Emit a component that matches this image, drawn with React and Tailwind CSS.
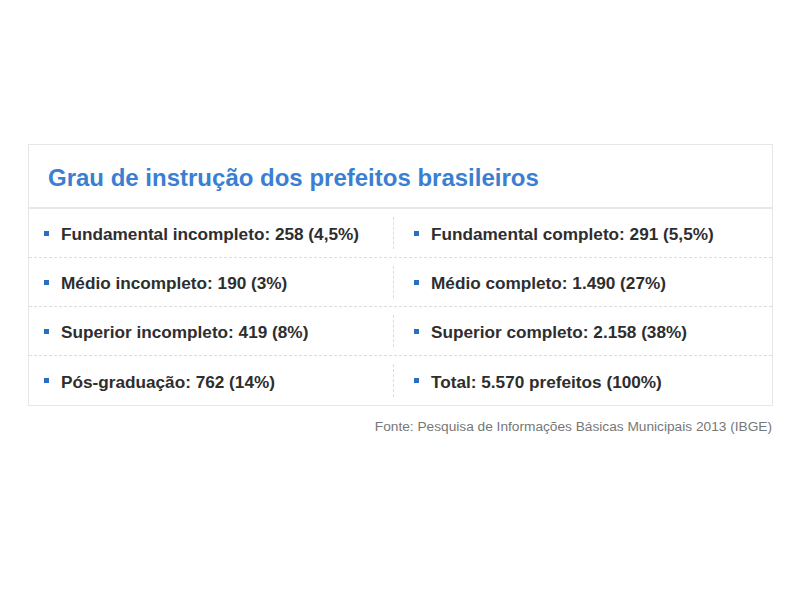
const rows = [
  ['Fundamental incompleto: 258 (4,5%)', 'Fundamental completo: 291 (5,5%)'],
  ['Médio incompleto: 190 (3%)', 'Médio completo: 1.490 (27%)'],
  ['Superior incompleto: 419 (8%)', 'Superior completo: 2.158 (38%)'],
  ['Pós-graduação: 762 (14%)', 'Total: 5.570 prefeitos (100%)'],
];

const Item = ({ text, first }) => (
  <div className={`flex items-center ${first ? 'pl-[15px]' : 'pl-[20px]'}`}>
    <span className="w-[5px] h-[5px] bg-[#2a6ec4] shrink-0" />
    <span className="ml-[12px] text-[17.2px] font-bold text-[#2e2e2e] whitespace-nowrap leading-none pt-[4px]">{text}</span>
  </div>
);

export default function App() {
  return (
    <div className="w-[800px] h-[600px] bg-white font-['Liberation_Sans',Arial,sans-serif] pt-[144px] pl-[28px]">
      <div className="w-[745px] border border-[#e6e6e6]">
        <div className="h-[64px] border-b-2 border-[#e8e8e8] flex items-center pl-[19px] pt-[4px]">
          <h2 className="text-[24px] font-bold text-[#3a7fd2] leading-none">
            Grau de instrução dos prefeitos brasileiros
          </h2>
        </div>
        {rows.map(([a, b], i) => (
          <div
            key={i}
            className={`h-[49px] grid grid-cols-[364px_1fr] ${i < rows.length - 1 ? 'border-b border-dashed border-[#dcdcdc]' : ''}`}
          >
            <Item text={a} first />
            <div className="flex items-stretch">
              <div className="my-[8px] border-l border-dashed border-[#dcdcdc]" />
              <Item text={b} />
            </div>
          </div>
        ))}
      </div>
      <p className="w-[745px] text-right text-[13.7px] text-[#777] mt-[14px] leading-none pr-[1px]">
        Fonte: Pesquisa de Informações Básicas Municipais 2013 (IBGE)
      </p>
    </div>
  );
}
